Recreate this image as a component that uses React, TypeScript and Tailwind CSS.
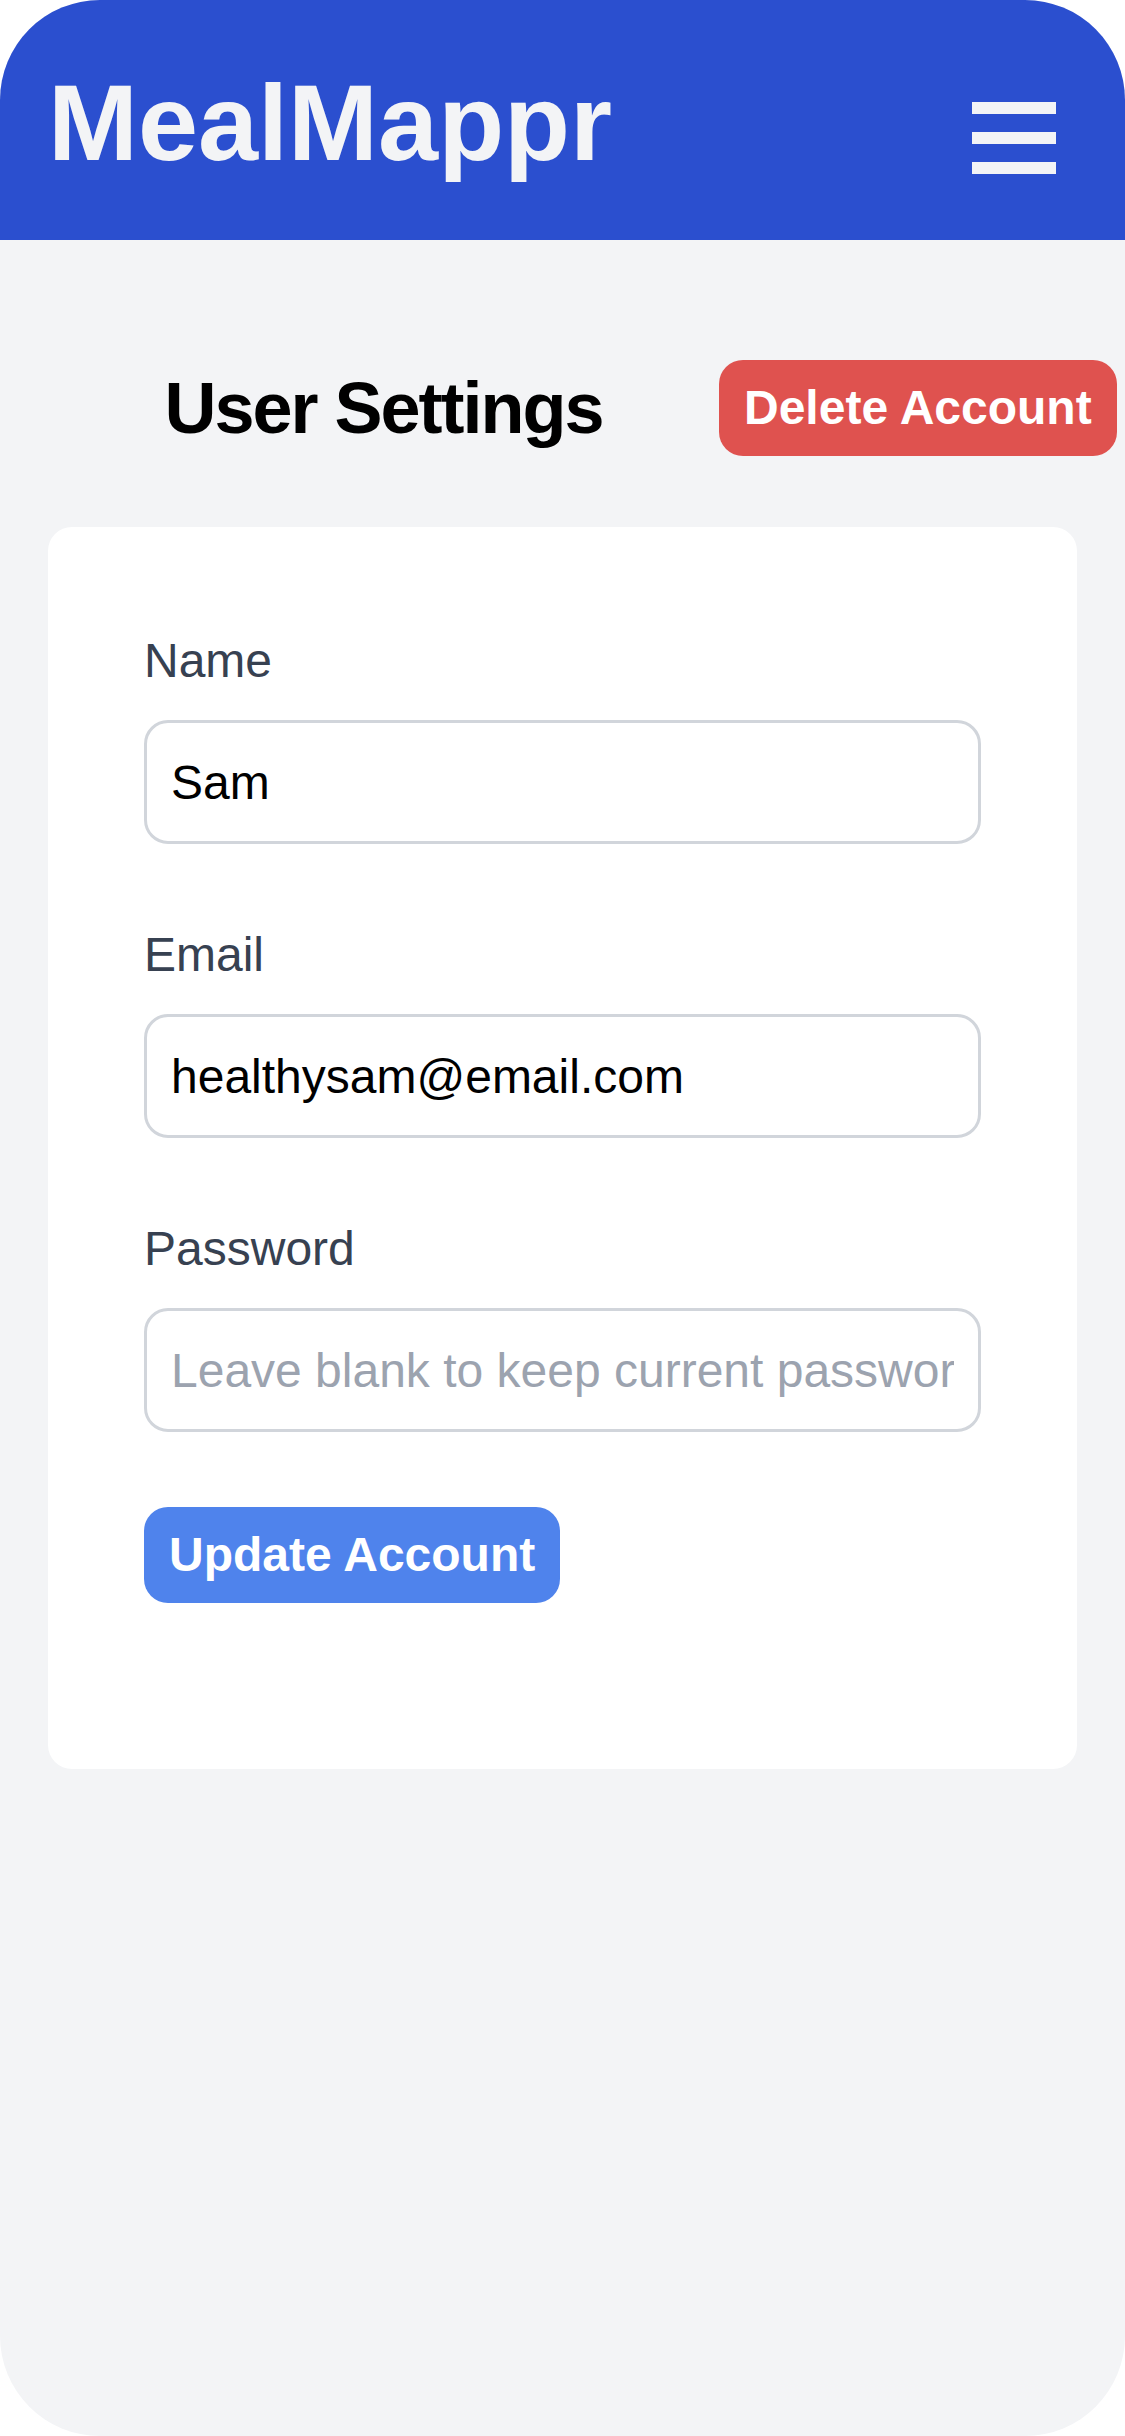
import React from 'react';

interface Field {
  label: string;
  type: string;
  value?: string;
  placeholder?: string;
}

const fields: Field[] = [
  { label: 'Name', type: 'text', value: 'Sam' },
  { label: 'Email', type: 'email', value: 'healthysam@email.com' },
  { label: 'Password', type: 'password', placeholder: 'Leave blank to keep current password' },
];

const FormField = ({ field }: { field: Field }) => {
  return (
    <div className="mb-[75px]">
      <label className="block text-[48px] leading-[72px] text-[#374151] mb-[23px]">{field.label}</label>
      <input
        type={field.type}
        defaultValue={field.value}
        placeholder={field.placeholder}
        className="block w-full h-[124px] border-[3px] border-[#d1d5db] rounded-[24px] px-[24px] text-[48px] text-black placeholder:text-[#9ca3af] outline-none"
      />
    </div>
  );
};

const App = () => {
  return (
    <div className="w-[1125px] h-[2436px] bg-white font-['Liberation_Sans',Arial,sans-serif]">
      <div className="h-full rounded-[100px] overflow-hidden bg-[#f3f4f6] flex flex-col">
        {/* top bar */}
        <header className="h-[240px] shrink-0 bg-[#2b4fcf] flex items-center justify-between pl-[48px] pr-[69px]">
          <h1 className="text-[108px] leading-[120px] font-bold text-[#f3f4f6] mt-[6px]">MealMappr</h1>
          <button className="flex flex-col gap-[18px] mt-[36px]">
            <span className="block w-[84px] h-[12px] bg-[#f3f4f6]" />
            <span className="block w-[84px] h-[12px] bg-[#f3f4f6]" />
            <span className="block w-[84px] h-[12px] bg-[#f3f4f6]" />
          </button>
        </header>

        <div className="mt-[120px] flex items-center pl-[48px]">
          <h2 className="w-[671px] shrink-0 text-center text-[72px] leading-[96px] font-bold tracking-[-2px] text-black">User Settings</h2>
          <button className="h-[96px] shrink-0 whitespace-nowrap px-[25px] rounded-[24px] bg-[#df524f] text-white text-[48px] font-bold">
            Delete Account
          </button>
        </div>

        <div className="mt-[71px] mx-[48px] rounded-[24px] bg-white pt-[98px] px-[96px] pb-[166px]">
          {fields.map((field, index) => (
            <FormField key={index} field={field} />
          ))}
          <button className="h-[96px] px-[25px] rounded-[24px] bg-[#4f83ec] text-white text-[48px] font-bold whitespace-nowrap">
            Update Account
          </button>
        </div>
      </div>
    </div>
  );
};

export default App;
